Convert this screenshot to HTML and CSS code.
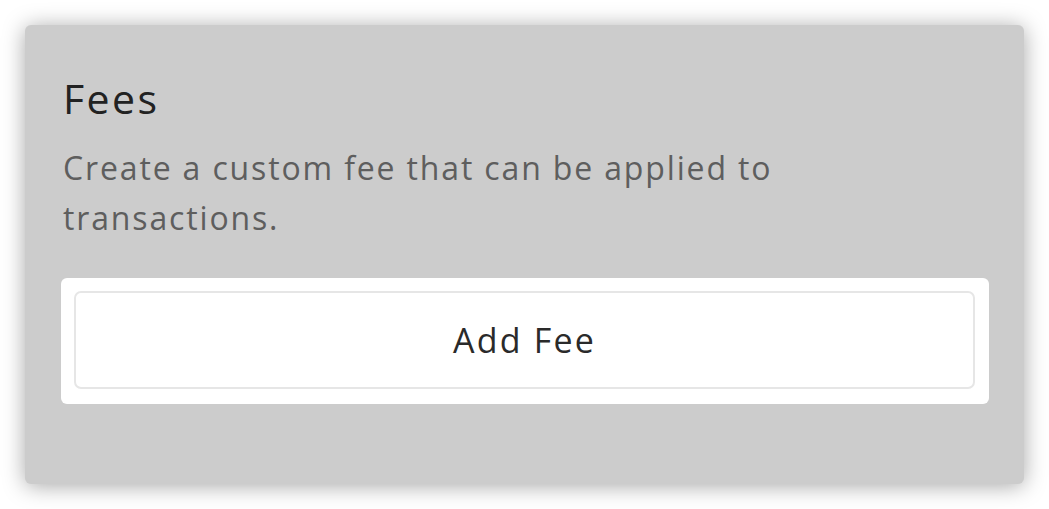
FILE: index.html
```html
<!DOCTYPE html>
<html lang="en">
<head>
    <meta charset="UTF-8">
    <meta name="viewport" content="width=device-width, initial-scale=1.0">
    <title>Fees</title>
    <link rel="stylesheet" href="styles.css">
</head>
<body>

    <div class="card">
        <h2 class="card-title">Fees</h2>
        <p class="card-text">Create a custom fee that can be applied to transactions.</p>

        <div class="button-wrap">
            <button class="add-button">Add Fee</button>
        </div>
    </div>

</body>
</html>
```

FILE: styles.css
```css
body {
    font-family: "Open Sans", sans-serif;
    margin: 0;
    padding: 25px;
    background-color: #ffffff;
}
.card {
    width: 999px;
    height: 459px;
    box-sizing: border-box;
    padding: 0 35px 0 36px;
    background-color: #cccccc;
    border-radius: 6px;
    box-shadow: 0 2px 22px rgba(0, 0, 0, 0.35);
    overflow: hidden;
}
.card-title {
    margin: 48px 0 0 2px;
    font-size: 41px;
    font-weight: 400;
    line-height: 50px;
    letter-spacing: 2.4px;
    color: #222222;
}
.card-text {
    margin: 20px 0 0 2px;
    max-width: 800px;
    font-size: 32px;
    line-height: 50px;
    letter-spacing: 1.85px;
    color: #5e5e5e;
}
.button-wrap {
    margin-top: 35px;
    padding: 13px 14px 15px 13px;
    background-color: #ffffff;
    border-radius: 6px;
}
.add-button {
    display: block;
    width: 100%;
    height: 98px;
    background-color: #ffffff;
    border: 2px solid #e6e6e6;
    border-radius: 7px;
    font-family: "Open Sans", sans-serif;
    font-size: 34px;
    letter-spacing: 2.2px;
    color: #2a2a2a;
    cursor: pointer;
}
```
